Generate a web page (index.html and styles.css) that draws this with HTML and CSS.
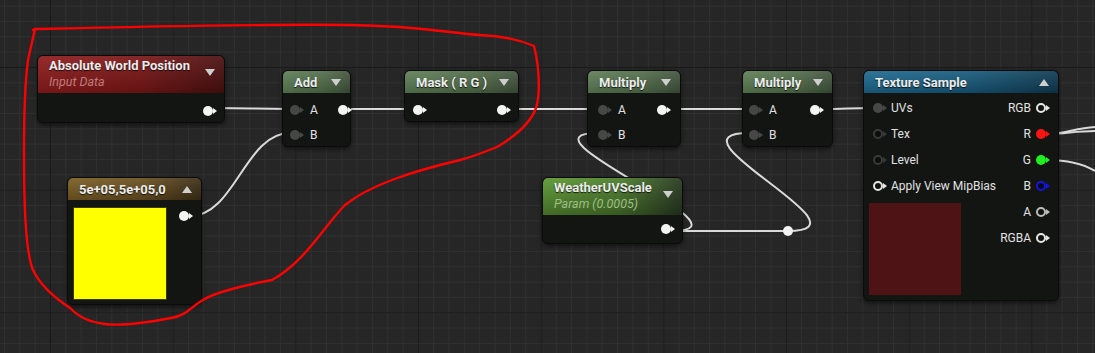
FILE: index.html
```html
<!DOCTYPE html>
<html lang="en">
<head>
    <meta charset="UTF-8">
    <title>Material Graph</title>
    <link rel="stylesheet" href="styles.css">
</head>
<body>

<div class="graph">

    <!-- wires, drawn under the nodes -->
    <svg class="wires" width="1095" height="353" viewBox="0 0 1095 353">
        <path d="M214,108 C250,108 254,109 290,109"/>
        <path d="M190,216 C235,216 245,133 290,133"/>
        <path d="M340,109 L413,109"/>
        <path d="M508,109 L598,109"/>
        <path d="M668,109 L749,109"/>
        <path d="M821,109 C845,109 850,108 873,108"/>
        <path d="M672,231 C762,231 508,133 598,133"/>
        <path d="M672,231 L784,231"/>
        <path d="M788,231 C878,231 659,133 749,133"/>
        <path d="M1047,134 C1065,134 1075,128 1095,127"/>
        <path d="M1047,134 C1065,134 1075,131 1095,131"/>
        <path d="M1047,160 C1070,160 1085,165 1095,171"/>
        <circle class="knot" cx="788" cy="231" r="5"/>
    </svg>

    <div class="node awp">
        <div class="node-head tall red">
            <div class="titles">
                <span class="title">Absolute World Position</span>
                <span class="sub">Input Data</span>
            </div>
            <span class="caret down"></span>
        </div>
        <div class="node-body">
            <div class="row end"><span class="pin out"></span></div>
        </div>
    </div>

    <div class="node add">
        <div class="node-head green">
            <span class="title">Add</span>
            <span class="caret down"></span>
        </div>
        <div class="node-body">
            <div class="row"><span class="pin dim"></span><span class="lbl">A</span><span class="fill"></span><span class="pin out"></span></div>
            <div class="row"><span class="pin dim"></span><span class="lbl">B</span></div>
        </div>
    </div>

    <div class="node mask">
        <div class="node-head green">
            <span class="title">Mask ( R G )</span>
            <span class="caret down"></span>
        </div>
        <div class="node-body">
            <div class="row"><span class="pin out"></span><span class="fill"></span><span class="pin out"></span></div>
        </div>
    </div>

    <div class="node mul1">
        <div class="node-head green">
            <span class="title">Multiply</span>
            <span class="caret down"></span>
        </div>
        <div class="node-body">
            <div class="row"><span class="pin dim"></span><span class="lbl">A</span><span class="fill"></span><span class="pin out"></span></div>
            <div class="row"><span class="pin dim"></span><span class="lbl">B</span></div>
        </div>
    </div>

    <div class="node mul2">
        <div class="node-head green">
            <span class="title">Multiply</span>
            <span class="caret down"></span>
        </div>
        <div class="node-body">
            <div class="row"><span class="pin dim"></span><span class="lbl">A</span><span class="fill"></span><span class="pin out"></span></div>
            <div class="row"><span class="pin dim"></span><span class="lbl">B</span></div>
        </div>
    </div>

    <div class="node tex">
        <div class="node-head blue">
            <span class="title">Texture Sample</span>
            <span class="caret up"></span>
        </div>
        <div class="node-body split">
            <div class="col left">
                <div class="row wide"><span class="pin dim"></span><span class="lbl">UVs</span></div>
                <div class="row wide"><span class="pin hollow-dim"></span><span class="lbl">Tex</span></div>
                <div class="row wide"><span class="pin hollow-dim"></span><span class="lbl">Level</span></div>
                <div class="row wide"><span class="pin hollow"></span><span class="lbl">Apply View MipBias</span></div>
                <div class="swatch maroon"></div>
            </div>
            <div class="col right">
                <div class="row wide"><span class="lbl">RGB</span><span class="pin hollow"></span></div>
                <div class="row wide"><span class="lbl">R</span><span class="pin red"></span></div>
                <div class="row wide"><span class="lbl">G</span><span class="pin green"></span></div>
                <div class="row wide"><span class="lbl">B</span><span class="pin blue"></span></div>
                <div class="row wide"><span class="lbl">A</span><span class="pin hollow grey"></span></div>
                <div class="row wide"><span class="lbl">RGBA</span><span class="pin hollow"></span></div>
            </div>
        </div>
    </div>

    <div class="node vec">
        <div class="node-head gold">
            <span class="title">5e+05,5e+05,0</span>
            <span class="caret up"></span>
        </div>
        <div class="node-body split">
            <div class="swatch yellow"></div>
            <div class="col right"><div class="row"><span class="pin out"></span></div></div>
        </div>
    </div>

    <div class="node uvs">
        <div class="node-head tall lime">
            <div class="titles">
                <span class="title">WeatherUVScale</span>
                <span class="sub">Param (0.0005)</span>
            </div>
            <span class="caret down"></span>
        </div>
        <div class="node-body">
            <div class="row end"><span class="pin out"></span></div>
        </div>
    </div>

    <!-- red hand-drawn annotation -->
    <svg class="ink" width="1095" height="353" viewBox="0 0 1095 353">
        <path d="M33,30 L37,29 C120,27 250,24 350,25 C420,26 450,33 480,35 C505,36 520,40 534,46 C540,70 540,95 536,108 C530,125 512,138 497,147 C482,153 472,157 460,160 C410,172 370,185 345,205 C325,225 305,262 272,280 C250,284 215,292 203,300 C192,306 186,316 171,318 C150,322 120,326 105,324 C90,322 80,318 70,308 C55,298 40,285 33,270 C25,250 24,200 24,150 C24,100 26,75 28,60 L35,29"/>
    </svg>
</div>

</body>
</html>
```

FILE: styles.css
```css
body {
    margin: 0;
    background-color: #262626;
    font-family: Roboto, "Liberation Sans", sans-serif;
    overflow: hidden;
}
.graph {
    position: relative;
    width: 1095px;
    height: 353px;
    overflow: hidden;
    background-color: #262626;
    background-image:
        linear-gradient(to right, #1a1a1a 1px, transparent 1px),
        linear-gradient(to bottom, #1a1a1a 1px, transparent 1px),
        linear-gradient(to right, #303030 1px, transparent 1px),
        linear-gradient(to bottom, #303030 1px, transparent 1px);
    background-size: 122.67px 122.67px, 122.67px 122.67px, 15.333px 15.333px, 15.333px 15.333px;
    background-position: 50px 67px, 50px 67px, 50px 67px, 50px 67px;
}
.wires, .ink {
    position: absolute;
    left: 0;
    top: 0;
}
.wires path {
    fill: none;
    stroke: #dadada;
    stroke-width: 2;
}
.wires .knot {
    fill: #f2f2f2;
}
.ink path {
    fill: none;
    stroke: #ff0000;
    stroke-width: 2.4;
    stroke-linejoin: round;
    stroke-linecap: round;
}

/* nodes */
.node {
    position: absolute;
    box-sizing: border-box;
    background-color: #131513;
    border: 1px solid #0b0b0b;
    border-radius: 6px;
    box-shadow: 0 2px 4px rgba(0, 0, 0, 0.55);
    color: #e4e4e4;
}
.awp  { left: 37px;  top: 55px;  width: 188px; height: 68px; }
.add  { left: 282px; top: 70px;  width: 69px;  height: 77px; }
.mask { left: 404px; top: 70px;  width: 115px; height: 52px; }
.mul1 { left: 587px; top: 70px;  width: 94px;  height: 77px; }
.mul2 { left: 742px; top: 70px;  width: 91px;  height: 77px; }
.tex  { left: 863px; top: 70px;  width: 196px; height: 231px; }
.vec  { left: 67px;  top: 177px; width: 135px; height: 128px; }
.uvs  { left: 542px; top: 177px; width: 141px; height: 67px; }

.node-head {
    height: 22px;
    display: flex;
    align-items: center;
    justify-content: space-between;
    padding: 0 9px 0 11px;
    border-radius: 5px 5px 0 0;
}
.node-head.tall {
    height: 37px;
    align-items: flex-start;
    padding-top: 2px;
    box-sizing: border-box;
}
.node-head.tall .caret {
    margin-top: 11px;
}
.titles {
    display: flex;
    flex-direction: column;
}
.title {
    font-size: 13px;
    font-weight: bold;
    color: #ececec;
    text-shadow: 0 1px 1px rgba(0, 0, 0, 0.8);
    white-space: nowrap;
}
.sub {
    font-size: 12.5px;
    font-style: italic;
    margin-top: 1px;
}
.red {
    background: linear-gradient(to bottom, rgba(255,255,255,0.08), rgba(0,0,0,0.18)),
                linear-gradient(to right, #8e1b1b, #7a1616 55%, #4a0f0f);
}
.red .sub { color: #c07c7a; }
.green {
    background: linear-gradient(to bottom, rgba(255,255,255,0.1), rgba(0,0,0,0.15)),
                linear-gradient(to right, #5b7b52, #4e6a47 60%, #3e5039);
}
.blue {
    background: linear-gradient(to bottom, rgba(255,255,255,0.08), rgba(0,0,0,0.2)),
                linear-gradient(to right, #1e6a90, #175a7c 55%, #0f3b52);
}
.gold {
    background: linear-gradient(to bottom, rgba(255,255,255,0.08), rgba(0,0,0,0.2)),
                linear-gradient(to right, #7a5d22, #6a5020 55%, #3d2f16);
}
.lime {
    background: linear-gradient(to bottom, rgba(255,255,255,0.05), rgba(0,0,0,0.3)),
                linear-gradient(to right, #5f9a35, #4f8030 55%, #2c3d24);
}
.lime .sub { color: #9fbf85; }

.caret {
    width: 0;
    height: 0;
    border-left: 5px solid transparent;
    border-right: 5px solid transparent;
    flex: none;
}
.caret.down { border-top: 7px solid #cfcfcf; }
.caret.up { border-bottom: 7px solid #cfcfcf; }

.node-body {
    padding-top: 4px;
}
.node-body.split {
    display: flex;
    justify-content: space-between;
    padding-top: 2px;
}
.row {
    display: flex;
    align-items: center;
    height: 25px;
    padding: 0 11px 0 7px;
    gap: 10px;
    font-size: 12px;
    color: #e2e2e2;
    white-space: nowrap;
}
.row.wide {
    height: 26px;
    padding: 0 0 0 9px;
    gap: 8px;
}
.col.right .row.wide {
    padding: 0 12px 0 0;
    gap: 5px;
}
.row.end {
    justify-content: flex-end;
}
.fill {
    flex: 1;
}
.awp .row { height: 27px; }
.mask .row { padding-left: 8px; }
.mul1 .row { padding: 0 13px 0 10px; }
.mul2 .row { padding: 0 12px 0 6px; }
.vec .row { padding-right: 12px; height: 18px; }
.vec .node-body.split { padding-top: 7px; }
.uvs .node-body { padding-top: 1px; }
.col {
    display: flex;
    flex-direction: column;
}
.col.left {
    flex: 1;
    min-width: 0;
}
.col.right {
    flex: none;
    align-items: flex-end;
}
.swatch {
    width: 92px;
    height: 92px;
    margin-left: 5px;
}
.swatch.maroon {
    background-color: #4e1315;
    margin-top: 4px;
}
.swatch.yellow {
    background-color: #ffff00;
    border: 1px solid #3a3a10;
    width: 92px;
    height: 91px;
}

/* pins */
.pin {
    position: relative;
    flex: none;
    width: 10px;
    height: 10px;
    border-radius: 50%;
    box-sizing: border-box;
}
.pin::after {
    content: "";
    position: absolute;
    right: -4px;
    top: 2px;
    border-left: 4px solid currentColor;
    border-top: 3px solid transparent;
    border-bottom: 3px solid transparent;
}
.pin.out { background: #f4f4f4; color: #f4f4f4; }
.pin.dim { background: #474747; color: #474747; }
.pin.hollow { border: 2px solid #e6e6e6; background: #111; color: #e6e6e6; }
.pin.hollow::after, .pin.hollow-dim::after, .pin.blue::after { right: -6px; top: 0; }
.pin.hollow.grey { border-color: #bdbdbd; color: #bdbdbd; }
.pin.hollow-dim { border: 2px solid #393939; background: #0d0d0d; color: #393939; }
.pin.red { background: #ff1414; color: #ff1414; }
.pin.green { background: #1ff01f; color: #1ff01f; }
.pin.blue { border: 2px solid #1414e6; background: #0a0a14; color: #1414e6; }
```
